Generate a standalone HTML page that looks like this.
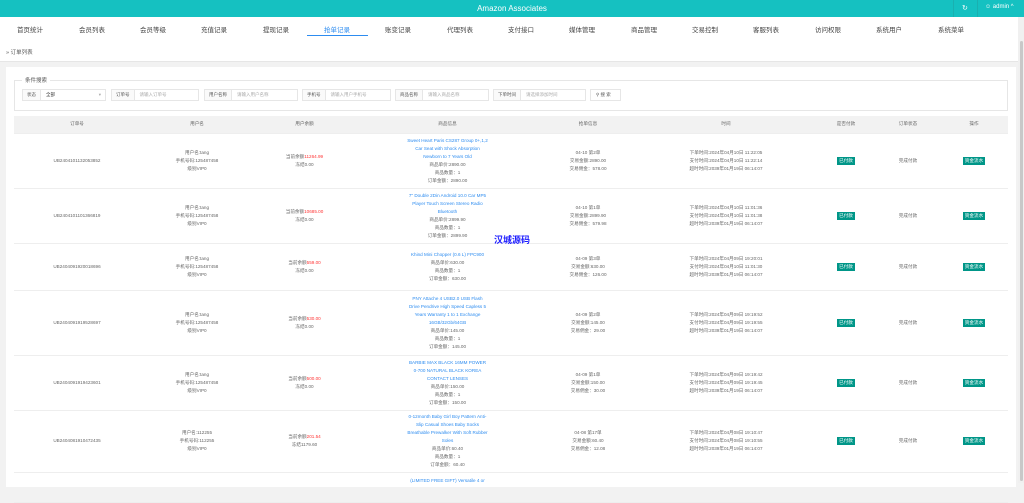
<!DOCTYPE html>
<html><head><meta charset="utf-8"><style>
*{margin:0;padding:0;box-sizing:border-box}
body{width:1024px;height:483px;overflow:hidden;background:#f2f2f2;font-family:"Liberation Sans","Noto Sans CJK SC",sans-serif;color:#666;position:relative}
.top{position:absolute;left:0;top:0;width:1024px;height:17px;background:#15c1c1;color:#fff}
.nav{position:absolute;left:0;top:17px;width:1018px;height:22px;background:#fff}
.nav span{position:absolute;top:7px;font-size:6.5px;color:#444;transform:translateX(-50%);white-space:nowrap}
.bc{position:absolute;left:0;top:39px;width:1018px;height:23px;background:#fff;border-bottom:1px solid #e6e6e6}
.panel{position:absolute;left:6px;top:67px;width:1010px;height:420px;background:#fff}
.sb{position:absolute;left:1018px;top:17px;width:6px;height:466px;background:#f0f0f0}
.sb i{position:absolute;left:2px;top:24px;width:3px;height:440px;background:#c8c8c8;border-radius:2px}
.fs{position:absolute;left:14px;top:80px;width:994px;height:31px;border:1px solid #e6e6e6}
.lg{position:absolute;left:22px;top:76px;background:#fff;padding:0 3px;font-size:5.5px;color:#555}
.inp{position:absolute;top:89px;height:12px;border:1px solid #e6e6e6;font-size:4.5px;color:#aaa;display:flex}
.inp b{font-weight:normal;color:#555;background:#fafafa;border-right:1px solid #e6e6e6;padding:0 4px;line-height:10px}
.inp em{font-style:normal;padding-left:5px;line-height:10px}
table{position:absolute;left:14px;top:116px;width:994px;border-collapse:collapse;table-layout:fixed}
td,th{text-align:center;font-size:4.6px;line-height:8px;color:#666;font-weight:normal;border-bottom:1px solid #eee;vertical-align:middle}
th{background:#f2f2f2;height:17px;color:#666}
.p{color:#2d8cf0;width:82px;margin:0 auto}
.r{color:#f33}
.g{display:inline-block;background:#009688;color:#fff;padding:0 2px;line-height:8px;font-size:4.6px}
</style></head><body>
<div class="top">
<div style="position:absolute;left:0;width:1024px;text-align:center;top:4px;font-size:8px">Amazon Associates</div>
<div style="position:absolute;left:953px;top:0;width:1px;height:17px;background:#1ab0b0"></div>
<div style="position:absolute;left:962px;top:4px;font-size:7px">&#x21bb;</div>
<div style="position:absolute;left:977px;top:0;width:1px;height:17px;background:#1ab0b0"></div>
<div style="position:absolute;left:985px;top:4px;font-size:6px">&#x263A; admin ^</div>
</div>
<div class="nav">
<span style="left:30px">首页统计</span><span style="left:92px">会员列表</span><span style="left:153px">会员等级</span><span style="left:214px">充值记录</span><span style="left:276px">提现记录</span><span style="left:337px;color:#2d8cf0">抢单记录</span><span style="left:398px">账变记录</span><span style="left:460px">代理列表</span><span style="left:521px">支付接口</span><span style="left:582px">媒体管理</span><span style="left:644px">商品管理</span><span style="left:705px">交易控制</span><span style="left:766px">客服列表</span><span style="left:828px">访问权限</span><span style="left:889px">系统用户</span><span style="left:951px">系统菜单</span>
<div style="position:absolute;left:307px;top:18px;width:61px;height:1px;background:#2d8cf0"></div>
</div>
<div class="bc"><span style="position:absolute;left:6px;top:9px;font-size:5.5px;color:#555">» 订单列表</span></div>
<div class="sb"><i></i></div>
<div class="panel"></div>
<div class="fs"></div><div class="lg">条件搜索</div>
<div class="inp" style="left:22px;width:84px"><b>状态</b><em style="color:#333">全部</em><em style="margin-left:auto;padding-right:4px">▾</em></div>
<div class="inp" style="left:111px;width:88px"><b>订单号</b><em>请输入订单号</em></div>
<div class="inp" style="left:204px;width:94px"><b>用户名称</b><em>请输入用户名称</em></div>
<div class="inp" style="left:302px;width:89px"><b>手机号</b><em>请输入用户手机号</em></div>
<div class="inp" style="left:395px;width:94px"><b>商品名称</b><em>请输入商品名称</em></div>
<div class="inp" style="left:493px;width:93px"><b>下单时间</b><em>请选择添加时间</em></div>
<div class="inp" style="left:590px;width:31px;color:#555"><em>&#x26B2; 搜 索</em></div>
<table>
<colgroup><col style="width:126px"><col style="width:114px"><col style="width:101px"><col style="width:185px"><col style="width:96px"><col style="width:180px"><col style="width:60px"><col style="width:64px"><col style="width:68px"></colgroup>
<tr><th>订单号</th><th>用户名</th><th>用户余额</th><th>商品信息</th><th>抢单信息</th><th>时间</th><th>是否付款</th><th>订单状态</th><th>操作</th></tr>
<tr style="height:55px"><td>UB2404101132053852</td><td>用户名:tang<br>手机号码:125487458<br>级别VIP0</td><td>当前余额<span class="r">11264.99</span><br>冻结0.00</td><td><div class="p">Sweet Heart Paris CS287 Group 0+,1,2 Car Seat with Shock Absorption Newborn to 7 Years Old</div>商品单价:2890.00<br>商品数量：1<br>订单金额：2890.00</td><td>04-10 第2单<br>交易金额:2890.00<br>交易佣金：578.00</td><td>下单时间:2024年04月10日 11:22:05<br>支付时间:2024年04月10日 11:22:14<br>超时时间:2039年01月19日 06:14:07</td><td><span class="g">已付款</span></td><td>完成付款</td><td><span class="g">资金流水</span></td></tr>
<tr style="height:55px"><td>UB2404101101366819</td><td>用户名:tang<br>手机号码:125487458<br>级别VIP0</td><td>当前余额<span class="r">10685.00</span><br>冻结0.00</td><td><div class="p">7" Double 2Din Android 10.0 Car MP5 Player Touch Screen Stereo Radio Bluetooth</div>商品单价:2899.90<br>商品数量：1<br>订单金额：2899.90</td><td>04-10 第1单<br>交易金额:2899.90<br>交易佣金：579.98</td><td>下单时间:2024年04月10日 11:01:36<br>支付时间:2024年04月10日 11:01:38<br>超时时间:2039年01月19日 06:14:07</td><td><span class="g">已付款</span></td><td>完成付款</td><td><span class="g">资金流水</span></td></tr>
<tr style="height:47px"><td>UB2404091920018696</td><td>用户名:tang<br>手机号码:125487458<br>级别VIP0</td><td>当前余额<span class="r">559.00</span><br>冻结0.00</td><td><div class="p">Khind Mini Chopper (0.6 L) FPC900</div>商品单价:630.00<br>商品数量：1<br>订单金额：630.00</td><td>04-09 第3单<br>交易金额:630.00<br>交易佣金：126.00</td><td>下单时间:2024年04月09日 19:20:01<br>支付时间:2024年04月10日 11:01:30<br>超时时间:2039年01月19日 06:14:07</td><td><span class="g">已付款</span></td><td>完成付款</td><td><span class="g">资金流水</span></td></tr>
<tr style="height:65px"><td>UB2404091919528697</td><td>用户名:tang<br>手机号码:125487458<br>级别VIP0</td><td>当前余额<span class="r">530.00</span><br>冻结0.00</td><td><div class="p">PNY Attache 4 USB2.0 USB Flash Drive Pendrive High Speed Capless 5 Years Warranty 1 to 1 Exchange 16GB/32Gb/64GB</div>商品单价:145.00<br>商品数量：1<br>订单金额：145.00</td><td>04-09 第2单<br>交易金额:145.00<br>交易佣金：29.00</td><td>下单时间:2024年04月09日 19:19:52<br>支付时间:2024年04月09日 19:19:55<br>超时时间:2039年01月19日 06:14:07</td><td><span class="g">已付款</span></td><td>完成付款</td><td><span class="g">资金流水</span></td></tr>
<tr style="height:55px"><td>UB2404091919423601</td><td>用户名:tang<br>手机号码:125487458<br>级别VIP0</td><td>当前余额<span class="r">500.00</span><br>冻结0.00</td><td><div class="p">BARBIE MAX BLACK 16MM POWER 0-700 NATURAL BLACK KOREA CONTACT LENSES</div>商品单价:150.00<br>商品数量：1<br>订单金额：150.00</td><td>04-09 第1单<br>交易金额:150.00<br>交易佣金：30.00</td><td>下单时间:2024年04月09日 19:19:42<br>支付时间:2024年04月09日 19:19:45<br>超时时间:2039年01月19日 06:14:07</td><td><span class="g">已付款</span></td><td>完成付款</td><td><span class="g">资金流水</span></td></tr>
<tr style="height:62px"><td>UB2404081910472435</td><td>用户名:112255<br>手机号码:112255<br>级别VIP0</td><td>当前余额<span class="r">201.54</span><br>冻结1179.60</td><td><div class="p">0-12month Baby Girl Boy Pattern Anti-Slip Casual Shoes Baby Socks Breathable Prewalker With Soft Rubber Soles</div>商品单价:60.40<br>商品数量：1<br>订单金额：60.40</td><td>04-08 第17单<br>交易金额:60.40<br>交易佣金：12.08</td><td>下单时间:2024年04月08日 19:10:47<br>支付时间:2024年04月08日 19:10:55<br>超时时间:2039年01月19日 06:14:07</td><td><span class="g">已付款</span></td><td>完成付款</td><td><span class="g">资金流水</span></td></tr>
<tr style="height:30px"><td></td><td></td><td></td><td style="vertical-align:top;padding-top:4px"><div class="p">(LIMITED FREE GIFT) Versatile 4 or</div></td><td></td><td></td><td></td><td></td><td></td></tr>
</table>
<div style="position:absolute;left:494px;top:233px;font-size:9px;font-weight:bold;color:#1a1aff">汉城源码</div>
</body></html>
